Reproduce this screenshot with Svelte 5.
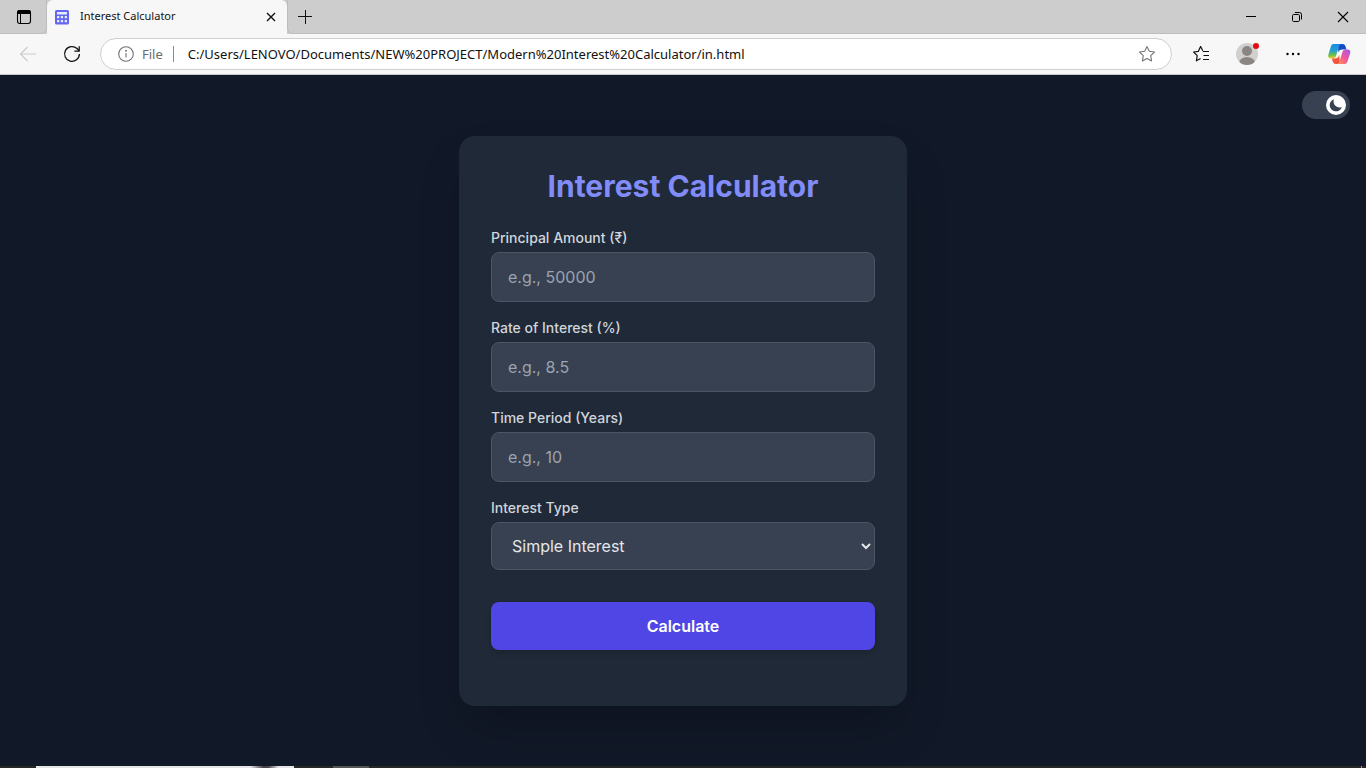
<script>
  const fields = [
    { id: 'principal', label: 'Principal Amount (₹)', hint: 'e.g., 50000' },
    { id: 'rate', label: 'Rate of Interest (%)', hint: 'e.g., 8.5' },
    { id: 'time', label: 'Time Period (Years)', hint: 'e.g., 10' }
  ];
</script>

<div class="window">
  <header>
    <div class="tabstrip">
      <button class="workspace" aria-label="Tab actions">
        <svg width="16" height="16" viewBox="0 0 16 16"><rect x="1.500" y="1.500" width="13" height="13" rx="2.400" fill="none" stroke="#000" stroke-width="1.100"/><path d="M1 5V3.500A2.500 2.500 0 0 1 3.500 1h9A2.500 2.500 0 0 1 15 3.500V5z"/><path d="M4.500 5v9.500" stroke="#000"/></svg>
      </button>
      <div class="tab">
        <svg width="16" height="16" viewBox="0 0 16 16"><rect x="1" y="1" width="14" height="14.5" rx="1.5" fill="#6366f1"/><path d="M3 3h10v2.500H3zM3 7h2.300v2.200H3zM6.800 7h2.300v2.200H6.800zM10.700 7H13v2.200h-2.300zM3 11h2.300v2.200H3zM6.800 11h2.300v2.200H6.800zM10.700 11H13v2.200h-2.300z" fill="#e8e8ff"/></svg>
        <span class="title">Interest Calculator</span>
        <button class="close" aria-label="Close tab"><svg width="10" height="10" viewBox="0 0 10 10"><path d="M1 1l8 8M9 1L1 9" stroke="#111" stroke-width="1.4"/></svg></button>
      </div>
      <button class="newtab" aria-label="New tab"><svg width="14" height="14" viewBox="0 0 14 14"><path d="M0 6.500h14M7.500 0v14" stroke="#111" stroke-width="1"/></svg></button>
      <div class="controls">
        <button aria-label="Minimize"><svg width="12" height="12" viewBox="0 0 12 12"><path d="M1 5.5h10" stroke="#000"/></svg></button>
        <button aria-label="Restore"><svg width="12" height="12" viewBox="0 0 12 12" fill="none" stroke="#000"><rect x="1.5" y="3.5" width="7" height="7" rx="1.2"/><path d="M3.8 1.5h4.700a2 2 0 0 1 2 2v5"/></svg></button>
        <button aria-label="Close"><svg width="12" height="12" viewBox="0 0 12 12"><path d="M1 1l10 10M11 1L1 11" stroke="#000" stroke-width="1.1"/></svg></button>
      </div>
    </div>
    <div class="toolbar">
      <button class="nav" aria-label="Back" disabled><svg width="18" height="16" viewBox="0 0 18 16" fill="none" stroke="#cbcbcb" stroke-width="1.2"><path d="M17 8H1.5M8.5 1L1.5 8l7 7"/></svg></button>
      <button class="nav" aria-label="Refresh"><svg width="18" height="18" viewBox="0 0 18 18" fill="none" stroke="#111" stroke-width="1.3"><path d="M16.400 9A7.400 7.400 0 1 1 14 3.500L16 5.800"/><path d="M16.200 1.200v4.900h-4.800"/></svg></button>
      <div class="address">
        <svg width="16" height="16" viewBox="0 0 16 16" fill="none" stroke="#717171" stroke-width="1.1"><circle cx="8" cy="8" r="7.3"/><path d="M8 7v4.500"/><circle cx="8" cy="4.8" r=".4" fill="#717171"/></svg>
        <span class="scheme">File</span>
        <input aria-label="Address" value="C:/Users/LENOVO/Documents/NEW%20PROJECT/Modern%20Interest%20Calculator/in.html" />
        <button class="star" aria-label="Add to favorites"><svg width="18" height="18" viewBox="0 0 18 18" fill="none" stroke="#777" stroke-width="1.1" stroke-linejoin="round"><path d="M9 1.500l2.300 4.800 5.200.7-3.800 3.600.9 5.300L9 13.400l-4.600 2.500.9-5.300L1.500 7l5.200-.7z"/></svg></button>
      </div>
      <button class="tool" aria-label="Favorites"><svg width="18" height="18" viewBox="0 0 18 18" fill="none" stroke="#111" stroke-width="1.2" stroke-linejoin="round"><path d="M10.800 5.800L8.600 1.500 6.400 6.300 1.600 7l3.600 3.600-.8 5.200 4.200-2.400M10.800 6.500H17M11.500 10.500H17M11 14.500h6"/></svg></button>
      <button class="tool" aria-label="Profile">
        <svg width="24" height="24" viewBox="0 0 24 24"><defs><clipPath id="disc"><circle cx="12" cy="12" r="11"/></clipPath></defs><circle cx="12" cy="12" r="11" fill="#d2d0ce"/><g clip-path="url(#disc)" fill="#8a8684"><circle cx="12" cy="9" r="5"/><ellipse cx="12" cy="21" rx="8" ry="6"/></g><circle cx="21" cy="4" r="3" fill="#e50914"/></svg>
      </button>
      <button class="tool" aria-label="Settings and more"><svg width="14" height="4" viewBox="0 0 14 4"><circle cx="1.500" cy="2" r="1.200"/><circle cx="7" cy="2" r="1.200"/><circle cx="12.500" cy="2" r="1.200"/></svg></button>
      <button class="tool" aria-label="Copilot">
        <svg width="24" height="22" viewBox="0 0 24 22">
          <defs>
            <linearGradient id="cool" x1="0" y1="0" x2="0" y2="1"><stop offset="0" stop-color="#168bea"/><stop offset=".45" stop-color="#20a0cf"/><stop offset=".75" stop-color="#66bd55"/><stop offset="1" stop-color="#efd12c"/></linearGradient>
            <linearGradient id="warm" x1="1" y1="0" x2="0" y2="1"><stop offset="0" stop-color="#9c58f4"/><stop offset=".5" stop-color="#f0569b"/><stop offset="1" stop-color="#ff9b4d"/></linearGradient>
          </defs>
          <path d="M11 1h4.500c2 0 2.500 1 3 2.500l1 3h-4.200c-2.300 0-3.300 1-4 3z" fill="#164bc5"/>
          <path d="M6.500 1h8c-1.500 0-2.200 1-2.800 3l-2.500 8.500c-.6 2.200-1.600 3-3.300 3H4C1.300 15.500.7 14 1.400 11.500L3.700 4c.6-2 1.300-3 2.800-3z" fill="url(#cool)"/>
          <path d="M13 21H9c-2 0-2.700-1-3.200-2.500l-1-3h3c2.500 0 3.600-1 4.400-3.500z" fill="#f5533d"/>
          <path d="M17.800 21h-8c1.500 0 2.200-1 2.800-3l2.700-8.500c.6-2.200 1.600-3 3.300-3h1.900c2.700 0 3.300 1.500 2.600 4L20.600 18c-.6 2-1.300 3-2.800 3z" fill="url(#warm)"/>
        </svg>
      </button>
    </div>
  </header>

  <main>
    <button class="toggle" role="switch" aria-checked="true" aria-label="Dark mode">
      <span class="knob"><svg width="14" height="14" viewBox="0 0 14 14"><path d="M12.800 9A6.200 6.200 0 1 1 5 1.200a6 6 0 0 0 7.800 7.800z" fill="#374151"/></svg></span>
    </button>
    <section class="card">
      <h1>Interest Calculator</h1>
      <form onsubmit={(e) => e.preventDefault()}>
        {#each fields as f}
          <div class="field">
            <label for={f.id}>{f.label}</label>
            <input id={f.id} type="number" step="any" placeholder={f.hint} />
          </div>
        {/each}
        <div class="field">
          <label for="type">Interest Type</label>
          <select id="type"><option>Simple Interest</option><option>Compound Interest</option></select>
        </div>
        <button class="submit" type="submit">Calculate</button>
      </form>
    </section>
  </main>
  <footer><span class="search"></span><span class="task"></span><span class="edge"></span></footer>
</div>

<style>
  :global(body) { margin: 0; background: #111827; }
  * { box-sizing: border-box; }
  button { font: inherit; padding: 0; border: 0; background: none; display: flex; align-items: center; justify-content: center; flex: none; }
  svg { display: block; flex: none; }
  .window { min-height: 100vh; display: flex; flex-direction: column; font-family: "Noto Sans", "Open Sans", sans-serif; }
  .tabstrip { height: 34px; background: #cdcdcd; display: flex; align-items: stretch; }
  .workspace { width: 47px; padding-left: 2px; border-bottom: 1px solid #bdbdbd; border-right: 1px solid #bdbdbd; border-radius: 0 0 6px 0; }
  .tab { width: 240px; background: #f7f7f7; border-radius: 6px 6px 0 0; display: flex; align-items: center; padding: 0 10px 0 7px; gap: 10px; }
  .title { flex: 1; font-size: 11px; line-height: 16px; padding-bottom: 2px; color: #111; white-space: nowrap; }
  .close { width: 12px; height: 20px; }
  .newtab { width: 34px; border-bottom: 1px solid #bdbdbd; border-left: 1px solid #bdbdbd; border-radius: 0 0 0 6px; }
  .controls { flex: 1; display: flex; justify-content: flex-end; border-bottom: 1px solid #bdbdbd; }
  .controls button { width: 46px; }
  .toolbar { height: 41px; background: #f7f7f7; border-bottom: 1px solid #c9c9c9; display: flex; align-items: center; padding: 0 4px 0 6px; }
  .nav { width: 44px; height: 32px; }
  .address { flex: 1; min-width: 0; height: 32px; margin: 0 6px; border: 1px solid #cfcfcf; border-radius: 16px; background: #fff; display: flex; align-items: center; padding: 0 15px 0 17px; }
  .scheme { margin-left: 8px; padding-right: 10px; border-right: 1px solid #8b8b8b; line-height: 16px; font-size: 13px; color: #6b6b6b; }
  .address input { flex: 1; min-width: 0; border: 0; outline: 0; padding: 0 0 0 14px; background: none; font: 13px "Noto Sans", sans-serif; color: #111; }
  .tool { width: 46px; height: 32px; }
  main { flex: 1; position: relative; background: #111827; display: flex; align-items: center; justify-content: center; padding: 16px; font-family: Inter, sans-serif; }
  .toggle { position: absolute; top: 16px; right: 16px; width: 48px; height: 28px; padding: 4px; border-radius: 14px; background: #374151; justify-content: flex-end; }
  .knob { width: 20px; height: 20px; border-radius: 50%; background: #fff; display: flex; align-items: center; justify-content: center; }
  .card { width: 100%; max-width: 448px; padding: 32px 32px 56px; border-radius: 16px; background: #1f2937; box-shadow: 0 25px 50px -12px rgba(0, 0, 0, .25); }
  h1 { margin: 0 0 24px; text-align: center; font-size: 30px; line-height: 36px; font-weight: 700; color: #818cf8; }
  form { display: flex; flex-direction: column; gap: 16px; }
  .field { display: flex; flex-direction: column; gap: 4px; }
  label { font-size: 14px; line-height: 20px; font-weight: 500; color: #d1d5db; }
  .field input, select { width: 100%; border: 1px solid #4b5563; border-radius: 8px; background: #374151; color: #e5e7eb; font-family: Inter, sans-serif; font-size: 16px; line-height: 24px; }
  .field input { height: 50px; padding: 12px 16px; appearance: textfield; }
  .field input::placeholder { color: #9ca3af; }
  select { height: 48px; padding: 0 0 0 16px; }
  .submit { margin-top: 16px; height: 48px; border-radius: 8px; background: #4f46e5; color: #fff; font-size: 16px; font-weight: 600; box-shadow: 0 4px 6px -1px rgba(0, 0, 0, .1), 0 2px 4px -2px rgba(0, 0, 0, .1); }
  footer { height: 2px; background: #272727; display: flex; gap: 39px; padding: 0 4px 0 36px; }
  .search { width: 258px; background: linear-gradient(90deg, #e6e6e6 83%, #4b414b 88%, #4b414b 90%, #e6e6e6 94%); }
  .task { width: 36px; background: #555; }
  .edge { width: 1px; margin-left: auto; background: #999; }
</style>
